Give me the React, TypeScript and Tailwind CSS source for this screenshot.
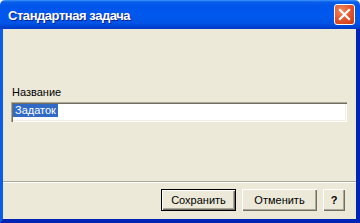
import React from 'react';

const font = { fontFamily: '"Liberation Sans", Arial, sans-serif' };

const XpButton: React.FC<{ label: string; isDefault?: boolean; w: string; bold?: boolean }> = ({ label, isDefault, w, bold }) => (
  <button
    className={
      isDefault
        ? `${w} h-[22px] border border-black bg-[#ece9d8] text-[11px] leading-[13px] text-black shadow-[inset_1px_1px_#ffffff,inset_-1px_-1px_#716f64,inset_-2px_-2px_#aca899]`
        : `${w} h-[22px] bg-[#ece9d8] text-[11px] leading-[13px] text-black shadow-[inset_1px_1px_#ffffff,inset_-1px_-1px_#716f64,inset_-2px_-2px_#aca899] ${bold ? 'font-bold' : ''}`
    }
  >
    {label}
  </button>
);

const App: React.FC = () => {
  return (
    <div className="w-[360px] h-[223px] flex flex-col bg-white" style={font}>
      {/* Title bar */}
      <div className="h-[29px] flex items-center justify-between rounded-t-[5px] bg-[linear-gradient(to_bottom,#3d95ff_0px,#0a5fe8_2px,#0055ea_6px,#0058ee_50%,#0054e6_80%,#0038c6_100%)] pl-[8px] pr-[5px]">
        <span className="text-[13px] font-bold tracking-[-0.45px] text-white [text-shadow:1px_1px_0_#0a1f8f] pt-[2px]">
          Стандартная задача
        </span>
        <div className="w-[21px] h-[21px] rounded-[3px] border border-white bg-[radial-gradient(circle_at_35%_30%,#f08a5e,#e0522a_55%,#c53a12)] flex items-center justify-center">
          <svg width="13" height="13" viewBox="0 0 13 13">
            <path d="M2 2 L11 11 M11 2 L2 11" stroke="#ffffff" strokeWidth="2.2" strokeLinecap="square" />
          </svg>
        </div>
      </div>

      {/* Body */}
      <div className="flex-1 flex flex-col bg-[#ece9d8] border-l-[3px] border-l-[#0b5de8] border-r-[4px] border-r-[#0024b4] border-b-[4px] border-b-[#0024b4]">
        <div className="h-[152px] flex flex-col pt-[57px] pl-[8px]">
          <label className="text-[11px] leading-[13px] text-black pl-[1px] mb-[3px]">Название</label>
          <div className="w-[336px] h-[20px] flex items-start bg-white pl-[2px] pt-[2px] shadow-[inset_1px_1px_#aca899,inset_2px_2px_#716f64,inset_-1px_-1px_#ffffff,inset_-2px_-2px_#f1efe2]">
            <span className="bg-[#316ac5] text-white text-[11px] leading-[13px] px-[2px]">Задаток</span>
          </div>
        </div>
        <div className="border-t border-t-[#aca899] border-b border-b-white" />
        <div className="flex justify-end gap-[6px] pt-[6px] pr-[11px]">
          <XpButton label="Сохранить" isDefault w="w-[75px]" />
          <XpButton label="Отменить" w="w-[75px]" />
          <XpButton label="?" w="w-[22px]" bold />
        </div>
      </div>
    </div>
  );
};

export default App;
